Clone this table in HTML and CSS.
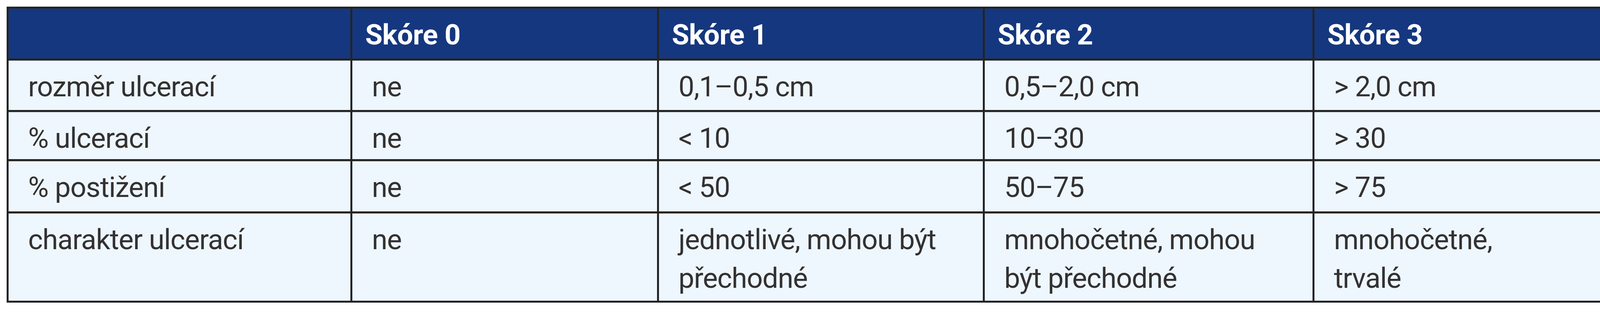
FILE: index.html
```html
<!DOCTYPE html>
<html lang="cs">
<head>
<meta charset="utf-8">
<title>Skóre ulcerací</title>
<link rel="stylesheet" href="styles.css">
</head>
<body>
<div class="page">
  <div class="score-table" role="table">
    <div class="cell head" role="columnheader"></div>
    <div class="cell head" role="columnheader">Skóre 0</div>
    <div class="cell head" role="columnheader">Skóre 1</div>
    <div class="cell head" role="columnheader">Skóre 2</div>
    <div class="cell head" role="columnheader">Skóre 3</div>

    <div class="cell" role="cell">rozměr ulcerací</div>
    <div class="cell" role="cell">ne</div>
    <div class="cell" role="cell">0,1–0,5 cm</div>
    <div class="cell" role="cell">0,5–2,0 cm</div>
    <div class="cell" role="cell">&gt; 2,0 cm</div>

    <div class="cell" role="cell">% ulcerací</div>
    <div class="cell" role="cell">ne</div>
    <div class="cell" role="cell">&lt; 10</div>
    <div class="cell" role="cell">10–30</div>
    <div class="cell" role="cell">&gt; 30</div>

    <div class="cell" role="cell">% postižení</div>
    <div class="cell" role="cell">ne</div>
    <div class="cell" role="cell">&lt; 50</div>
    <div class="cell" role="cell">50–75</div>
    <div class="cell" role="cell">&gt; 75</div>

    <div class="cell" role="cell">charakter ulcerací</div>
    <div class="cell" role="cell">ne</div>
    <div class="cell" role="cell">jednotlivé, mohou být<br>přechodné</div>
    <div class="cell" role="cell">mnohočetné, mohou<br>být přechodné</div>
    <div class="cell" role="cell">mnohočetné,<br>trvalé</div>
  </div>
</div>
</body>
</html>
```

FILE: styles.css
```css
html, body {
  margin: 0;
  padding: 0;
  background: #ffffff;
}

.page {
  padding: 17px 0 0 17px;
}

.score-table {
  display: grid;
  width: max-content;
  grid-template-columns: 875px 780px 829px 839px 802px;
  grid-template-rows: 128px 127px 121px 129px 224px;
  gap: 5px;
  padding: 5px;
  background: #242424;
  font-family: Roboto, "Liberation Sans", sans-serif;
  font-size: 72px;
  line-height: 99px;
}

.cell {
  background: #eef7fe;
  color: #333132;
  padding: 18px 20px 0 50px;
  letter-spacing: -1px;
  white-space: nowrap;
  overflow: hidden;
  box-shadow: inset 0 1px 0 #a8a8a8;
}

.cell.head {
  background: #15377f;
  color: #ffffff;
  font-weight: 700;
  padding-left: 33px;
  letter-spacing: -0.5px;
  box-shadow: none;
}
```
